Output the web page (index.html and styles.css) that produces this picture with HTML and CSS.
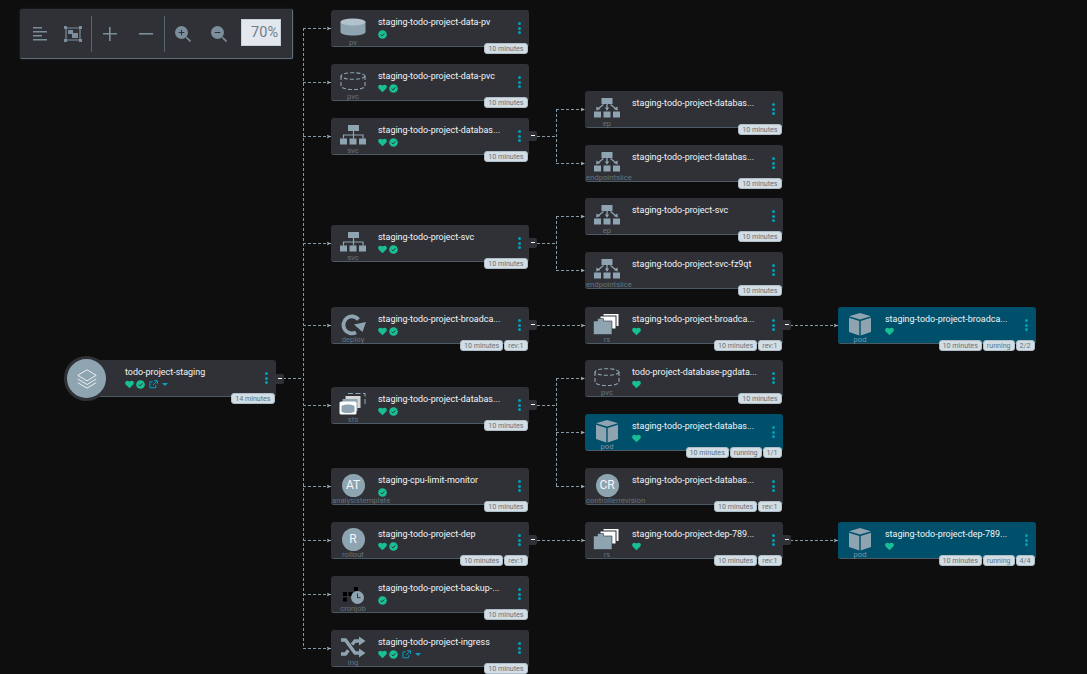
FILE: index.html
```html
<!DOCTYPE html>
<html lang="en">
<head>
    <meta charset="UTF-8">
    <title>Application resource tree</title>
    <link rel="stylesheet" href="styles.css">
</head>
<body>
    <!-- Icon set -->
    <svg class="defs" width="0" height="0">
        <symbol id="i-heart" viewBox="0 0 10 10"><path d="M5 9.2 1 5.2C-.2 4-.1 2.2 1 1.3 2.1.4 3.7.6 4.6 1.5L5 2l.4-.5c.9-.9 2.500-1.100 3.600-.2 1.100.9 1.200 2.700 0 3.900z"/></symbol>
        <symbol id="i-check" viewBox="0 0 10 10"><circle cx="5" cy="5" r="4.800"/><path d="M3 5.200 4.400 6.600 7.100 3.800" fill="none" stroke="#2f3136" stroke-width="1.100"/></symbol>
        <symbol id="i-link" viewBox="0 0 10 10"><path d="M7.600 5.600v3H1v-6.600h3.200M5.600.7h3.700v3.700M9.200.8 4.200 5.800" fill="none" stroke="currentColor" stroke-width="1.100"/></symbol>
        <symbol id="i-pv" viewBox="0 0 30 24"><path d="M2.500 7v10c0 2 5.500 3.500 12.500 3.500S27.500 19 27.500 17V7z"/><ellipse cx="15" cy="7" rx="12.500" ry="3.500" fill="#b3c3cd"/></symbol>
        <symbol id="i-pvc" viewBox="0 0 30 24"><g fill="none" stroke="currentColor" stroke-width="1.100" stroke-dasharray="4 2"><ellipse cx="15" cy="7" rx="12" ry="3.300"/><path d="M3 7v10c0 2 5.400 3.500 12 3.500S27 19 27 17V7"/></g></symbol>
        <symbol id="i-svc" viewBox="0 0 30 24"><path d="M10 2h11v6h-11zM2 15.500h7v6H2zM11.500 15.500h7v6h-7zM21 15.500h7v6h-7z"/><path d="M15.500 8v7.500M5.500 15.500V12h19.500v3.500" fill="none" stroke="currentColor" stroke-width="1.200"/></symbol>
        <symbol id="i-ep" viewBox="0 0 30 24"><path d="M9.500 2h11v6h-11zM2 15.500h7v6H2zM11.500 15.500h7v6h-7zM21 15.500h7v6h-7z"/><path d="M15 8v4M11.500 8.500 6.500 12.500M18.500 8.500 23.500 12.500" fill="none" stroke="currentColor" stroke-width="1.300"/><path d="M12.800 11.500h4.400L15 14.800zM4.500 10.500l4 2.600-4.300 1.400zM25.500 10.500l-4 2.600 4.300 1.400z"/></symbol>
        <symbol id="i-deploy" viewBox="0 0 30 24"><path d="M20.500 7.500A8.500 8.500 0 1 0 18 20.400" fill="none" stroke="currentColor" stroke-width="3.800"/><path d="M16 12.500 28 10 24.500 20z"/></symbol>
        <symbol id="i-rs" viewBox="0 0 30 24"><g stroke="#2f3136" stroke-width="1"><rect x="11" y="1.500" width="16" height="13" fill="#fff"/><rect x="8" y="4" width="16" height="13" fill="#fff"/></g><path d="M1.500 9h4V6.500h6V9H20v13.500H1.500z" stroke="#2f3136" stroke-width=".6"/></symbol>
        <symbol id="i-sts" viewBox="0 0 30 24"><path d="M10 1.500h17v12" fill="none" stroke="currentColor" stroke-width="1.100" stroke-dasharray="5 2.500"/><path d="M7.500 4h15v12H7.500z" fill="#fff" opacity=".8"/><path d="M4.500 7h15v12H4.500z" fill="#8fa4b1"/><rect x="1.500" y="9.500" width="17" height="13" rx="1.500" fill="#fff"/><path d="M3.500 14.500c0-1 2.500-2 6.500-2s6.500 1 6.500 2v5c0 .8-2.500 1.500-6.500 1.500s-6.500-.7-6.500-1.500z"/></symbol>
        <symbol id="i-pod" viewBox="0 0 30 24"><path d="M15 1 26 4.200 15 7.600 4 4.200z"/><path d="M4 5.700 14.300 9v14.500L4 20zM26 5.700 15.700 9v14.500L26 20z"/></symbol>
        <symbol id="i-cron" viewBox="0 0 30 24"><path d="M5 11h4v4H5zM5 16.500h4v4H5zM10.500 11h4v4h-4zM16 6h4v4h-4z" fill="#000"/><circle cx="19.500" cy="16.500" r="6.500"/><path d="M19.500 12.500v4.200h3" fill="none" stroke="#2f3136" stroke-width="1"/></symbol>
        <symbol id="i-ing" viewBox="0 0 30 24"><path d="M3 5h4.500l9.500 13h4.500M3 19h4.500l2.800-3.800M14 9.500 17 6h4.500" fill="none" stroke="currentColor" stroke-width="3.400"/><path d="M21 1.500 27.500 6 21 10.500zM21 13.500 27.500 18 21 22.500z"/></symbol>
        <symbol id="i-layers" viewBox="0 0 24 24"><g fill="none" stroke="#fff" stroke-width=".9" stroke-linejoin="round"><path d="M12 2 22 8 12 14 2 8z"/><path d="M2 12 12 18 22 12"/><path d="M2 16 12 22 22 16"/></g></symbol>
    </svg>

    <div class="canvas">
        <!-- Toolbar -->
        <div class="toolbar">
            <svg class="tool tool-sort" viewBox="0 0 14 14"><path d="M0 0h9v1.600H0zM0 4h14v1.600H0zM0 8h9v1.600H0zM0 12h14v1.600H0z"/></svg>
            <svg class="tool tool-fit" viewBox="0 0 18 16"><path d="M2 2h14v12H2z" fill="none" stroke="currentColor" stroke-width="1.200"/><path d="M0 0h3v3H0zM15 0h3v3h-3zM0 13h3v3H0zM15 13h3v3h-3zM4 4h5v4H4z"/><path d="M8 7h6v5H8z"/></svg>
            <span class="tool-sep"></span>
            <svg class="tool tool-plus" viewBox="0 0 14 14"><path d="M6 0h1.600v6H14v1.600H7.600V14H6V7.600H0V6h6z"/></svg>
            <svg class="tool tool-minus" viewBox="0 0 14 14"><path d="M0 6h14v1.600H0z"/></svg>
            <span class="tool-sep"></span>
            <svg class="tool tool-zoom" viewBox="0 0 16 16"><circle cx="6.500" cy="6.500" r="6.500"/><path d="M11 11l4.500 4.500" stroke="currentColor" stroke-width="1.600"/><path d="M3.700 6h5.600v1H3.700zM6 3.700h1v5.600H6z" fill="#2f3136"/></svg>
            <svg class="tool tool-zoom" viewBox="0 0 16 16"><circle cx="6.500" cy="6.500" r="6.500"/><path d="M11 11l4.500 4.500" stroke="currentColor" stroke-width="1.600"/><path d="M3.700 6h5.600v1H3.700z" fill="#2f3136"/></svg>
            <input class="zoom-input" value="70%">
        </div>

        <!-- Edges -->
        <svg class="edges" width="1087" height="674">
            <defs>
                <marker id="arrow" markerUnits="userSpaceOnUse" markerWidth="5" markerHeight="5" refX="4.500" refY="2.500" orient="auto"><path d="M0 .5 4.500 2.500 0 4.500 1.200 2.500z" fill="#9fb2be"/></marker>
            </defs>
            <g class="edge-lines">
                <path d="M283 378.500H303"/>
                <path d="M303.500 28V648"/>
                <path d="M303 28.500H331" marker-end="url(#arrow)"/>
                <path d="M303 82.500H331" marker-end="url(#arrow)"/>
                <path d="M303 136.500H331" marker-end="url(#arrow)"/>
                <path d="M303 243.500H331" marker-end="url(#arrow)"/>
                <path d="M303 325.500H331" marker-end="url(#arrow)"/>
                <path d="M303 405.500H331" marker-end="url(#arrow)"/>
                <path d="M303 486.500H331" marker-end="url(#arrow)"/>
                <path d="M303 540.500H331" marker-end="url(#arrow)"/>
                <path d="M303 594.500H331" marker-end="url(#arrow)"/>
                <path d="M303 648.500H331" marker-end="url(#arrow)"/>
                <path d="M537 136.500H556"/>
                <path d="M556.500 109V163"/>
                <path d="M556 109.500H585" marker-end="url(#arrow)"/>
                <path d="M556 163.500H585" marker-end="url(#arrow)"/>
                <path d="M537 243.500H556"/>
                <path d="M556.500 216V270"/>
                <path d="M556 216.500H585" marker-end="url(#arrow)"/>
                <path d="M556 270.500H585" marker-end="url(#arrow)"/>
                <path d="M537 325.500H585" marker-end="url(#arrow)"/>
                <path d="M537 405.500H556"/>
                <path d="M556.500 378V486"/>
                <path d="M556 378.500H585" marker-end="url(#arrow)"/>
                <path d="M556 432.500H585" marker-end="url(#arrow)"/>
                <path d="M556 486.500H585" marker-end="url(#arrow)"/>
                <path d="M537 540.500H585" marker-end="url(#arrow)"/>
                <path d="M790 325.500H838" marker-end="url(#arrow)"/>
                <path d="M790 540.500H838" marker-end="url(#arrow)"/>
            </g>
        </svg>

        <!-- Root -->
        <div class="node node-root" style="left:78px;top:360px">
            <div class="root-circle"><svg><use href="#i-layers"/></svg></div>
            <div class="node-icon"></div>
            <div class="node-body">
                <div class="node-title">todo-project-staging</div>
                <div class="node-status"><svg class="st st-ok"><use href="#i-heart"/></svg><svg class="st st-ok"><use href="#i-check"/></svg><svg class="st st-link"><use href="#i-link"/></svg><span class="caret"></span></div>
            </div>
            <div class="kebab"><i></i><i></i><i></i></div>
            <div class="tags"><span class="tag">14 minutes</span></div>
            <span class="collapse"></span>
        </div>

        <!-- Column 1 -->
        <div class="node" style="left:331px;top:10px">
            <div class="node-icon"><svg class="kind-icon"><use href="#i-pv"/></svg><span class="kind">pv</span></div>
            <div class="node-body"><div class="node-title">staging-todo-project-data-pv</div><div class="node-status"><svg class="st st-ok"><use href="#i-check"/></svg></div></div>
            <div class="kebab"><i></i><i></i><i></i></div>
            <div class="tags"><span class="tag">10 minutes</span></div>
        </div>
        <div class="node" style="left:331px;top:64px">
            <div class="node-icon"><svg class="kind-icon"><use href="#i-pvc"/></svg><span class="kind">pvc</span></div>
            <div class="node-body"><div class="node-title">staging-todo-project-data-pvc</div><div class="node-status"><svg class="st st-ok"><use href="#i-heart"/></svg><svg class="st st-ok"><use href="#i-check"/></svg></div></div>
            <div class="kebab"><i></i><i></i><i></i></div>
            <div class="tags"><span class="tag">10 minutes</span></div>
        </div>
        <div class="node" style="left:331px;top:118px">
            <div class="node-icon"><svg class="kind-icon"><use href="#i-svc"/></svg><span class="kind">svc</span></div>
            <div class="node-body"><div class="node-title">staging-todo-project-databas...</div><div class="node-status"><svg class="st st-ok"><use href="#i-heart"/></svg><svg class="st st-ok"><use href="#i-check"/></svg></div></div>
            <div class="kebab"><i></i><i></i><i></i></div>
            <div class="tags"><span class="tag">10 minutes</span></div>
            <span class="collapse"></span>
        </div>
        <div class="node" style="left:331px;top:225px">
            <div class="node-icon"><svg class="kind-icon"><use href="#i-svc"/></svg><span class="kind">svc</span></div>
            <div class="node-body"><div class="node-title">staging-todo-project-svc</div><div class="node-status"><svg class="st st-ok"><use href="#i-heart"/></svg><svg class="st st-ok"><use href="#i-check"/></svg></div></div>
            <div class="kebab"><i></i><i></i><i></i></div>
            <div class="tags"><span class="tag">10 minutes</span></div>
            <span class="collapse"></span>
        </div>
        <div class="node" style="left:331px;top:307px">
            <div class="node-icon"><svg class="kind-icon"><use href="#i-deploy"/></svg><span class="kind">deploy</span></div>
            <div class="node-body"><div class="node-title">staging-todo-project-broadca...</div><div class="node-status"><svg class="st st-ok"><use href="#i-heart"/></svg><svg class="st st-ok"><use href="#i-check"/></svg></div></div>
            <div class="kebab"><i></i><i></i><i></i></div>
            <div class="tags"><span class="tag">10 minutes</span><span class="tag">rev:1</span></div>
            <span class="collapse"></span>
        </div>
        <div class="node" style="left:331px;top:387px">
            <div class="node-icon"><svg class="kind-icon"><use href="#i-sts"/></svg><span class="kind">sts</span></div>
            <div class="node-body"><div class="node-title">staging-todo-project-databas...</div><div class="node-status"><svg class="st st-ok"><use href="#i-heart"/></svg><svg class="st st-ok"><use href="#i-check"/></svg></div></div>
            <div class="kebab"><i></i><i></i><i></i></div>
            <div class="tags"><span class="tag">10 minutes</span></div>
            <span class="collapse"></span>
        </div>
        <div class="node" style="left:331px;top:468px">
            <div class="node-icon"><span class="kind-circle">AT</span><span class="kind kind-long">analysistemplate</span></div>
            <div class="node-body"><div class="node-title">staging-cpu-limit-monitor</div><div class="node-status"><svg class="st st-ok"><use href="#i-check"/></svg></div></div>
            <div class="kebab"><i></i><i></i><i></i></div>
            <div class="tags"><span class="tag">10 minutes</span></div>
        </div>
        <div class="node" style="left:331px;top:522px">
            <div class="node-icon"><span class="kind-circle">R</span><span class="kind">rollout</span></div>
            <div class="node-body"><div class="node-title">staging-todo-project-dep</div><div class="node-status"><svg class="st st-ok"><use href="#i-heart"/></svg><svg class="st st-ok"><use href="#i-check"/></svg></div></div>
            <div class="kebab"><i></i><i></i><i></i></div>
            <div class="tags"><span class="tag">10 minutes</span><span class="tag">rev:1</span></div>
            <span class="collapse"></span>
        </div>
        <div class="node" style="left:331px;top:576px">
            <div class="node-icon"><svg class="kind-icon"><use href="#i-cron"/></svg><span class="kind">cronjob</span></div>
            <div class="node-body"><div class="node-title">staging-todo-project-backup-...</div><div class="node-status"><svg class="st st-ok"><use href="#i-check"/></svg></div></div>
            <div class="kebab"><i></i><i></i><i></i></div>
            <div class="tags"><span class="tag">10 minutes</span></div>
        </div>
        <div class="node" style="left:331px;top:630px">
            <div class="node-icon"><svg class="kind-icon"><use href="#i-ing"/></svg><span class="kind">ing</span></div>
            <div class="node-body"><div class="node-title">staging-todo-project-ingress</div><div class="node-status"><svg class="st st-ok"><use href="#i-heart"/></svg><svg class="st st-ok"><use href="#i-check"/></svg><svg class="st st-link"><use href="#i-link"/></svg><span class="caret"></span></div></div>
            <div class="kebab"><i></i><i></i><i></i></div>
            <div class="tags"><span class="tag">10 minutes</span></div>
        </div>

        <!-- Column 2 -->
        <div class="node" style="left:585px;top:91px">
            <div class="node-icon"><svg class="kind-icon"><use href="#i-ep"/></svg><span class="kind">ep</span></div>
            <div class="node-body"><div class="node-title">staging-todo-project-databas...</div></div>
            <div class="kebab"><i></i><i></i><i></i></div>
            <div class="tags"><span class="tag">10 minutes</span></div>
        </div>
        <div class="node" style="left:585px;top:145px">
            <div class="node-icon"><svg class="kind-icon"><use href="#i-ep"/></svg><span class="kind kind-long">endpointslice</span></div>
            <div class="node-body"><div class="node-title">staging-todo-project-databas...</div></div>
            <div class="kebab"><i></i><i></i><i></i></div>
            <div class="tags"><span class="tag">10 minutes</span></div>
        </div>
        <div class="node" style="left:585px;top:198px">
            <div class="node-icon"><svg class="kind-icon"><use href="#i-ep"/></svg><span class="kind">ep</span></div>
            <div class="node-body"><div class="node-title">staging-todo-project-svc</div></div>
            <div class="kebab"><i></i><i></i><i></i></div>
            <div class="tags"><span class="tag">10 minutes</span></div>
        </div>
        <div class="node" style="left:585px;top:252px">
            <div class="node-icon"><svg class="kind-icon"><use href="#i-ep"/></svg><span class="kind kind-long">endpointslice</span></div>
            <div class="node-body"><div class="node-title">staging-todo-project-svc-fz9qt</div></div>
            <div class="kebab"><i></i><i></i><i></i></div>
            <div class="tags"><span class="tag">10 minutes</span></div>
        </div>
        <div class="node" style="left:585px;top:307px">
            <div class="node-icon"><svg class="kind-icon"><use href="#i-rs"/></svg><span class="kind">rs</span></div>
            <div class="node-body"><div class="node-title">staging-todo-project-broadca...</div><div class="node-status"><svg class="st st-ok"><use href="#i-heart"/></svg></div></div>
            <div class="kebab"><i></i><i></i><i></i></div>
            <div class="tags"><span class="tag">10 minutes</span><span class="tag">rev:1</span></div>
            <span class="collapse"></span>
        </div>
        <div class="node" style="left:585px;top:360px">
            <div class="node-icon"><svg class="kind-icon"><use href="#i-pvc"/></svg><span class="kind">pvc</span></div>
            <div class="node-body"><div class="node-title">todo-project-database-pgdata...</div><div class="node-status"><svg class="st st-ok"><use href="#i-heart"/></svg></div></div>
            <div class="kebab"><i></i><i></i><i></i></div>
            <div class="tags"><span class="tag">10 minutes</span></div>
        </div>
        <div class="node node-pod" style="left:585px;top:414px">
            <div class="node-icon"><svg class="kind-icon"><use href="#i-pod"/></svg><span class="kind">pod</span></div>
            <div class="node-body"><div class="node-title">staging-todo-project-databas...</div><div class="node-status"><svg class="st st-ok"><use href="#i-heart"/></svg></div></div>
            <div class="kebab"><i></i><i></i><i></i></div>
            <div class="tags"><span class="tag">10 minutes</span><span class="tag">running</span><span class="tag">1/1</span></div>
        </div>
        <div class="node" style="left:585px;top:468px">
            <div class="node-icon"><span class="kind-circle">CR</span><span class="kind kind-long">controllerrevision</span></div>
            <div class="node-body"><div class="node-title">staging-todo-project-databas...</div></div>
            <div class="kebab"><i></i><i></i><i></i></div>
            <div class="tags"><span class="tag">10 minutes</span><span class="tag">rev:1</span></div>
        </div>
        <div class="node" style="left:585px;top:522px">
            <div class="node-icon"><svg class="kind-icon"><use href="#i-rs"/></svg><span class="kind">rs</span></div>
            <div class="node-body"><div class="node-title">staging-todo-project-dep-789...</div><div class="node-status"><svg class="st st-ok"><use href="#i-heart"/></svg></div></div>
            <div class="kebab"><i></i><i></i><i></i></div>
            <div class="tags"><span class="tag">10 minutes</span><span class="tag">rev:1</span></div>
            <span class="collapse"></span>
        </div>

        <!-- Column 3 -->
        <div class="node node-pod" style="left:838px;top:307px">
            <div class="node-icon"><svg class="kind-icon"><use href="#i-pod"/></svg><span class="kind">pod</span></div>
            <div class="node-body"><div class="node-title">staging-todo-project-broadca...</div><div class="node-status"><svg class="st st-ok"><use href="#i-heart"/></svg></div></div>
            <div class="kebab"><i></i><i></i><i></i></div>
            <div class="tags"><span class="tag">10 minutes</span><span class="tag">running</span><span class="tag">2/2</span></div>
        </div>
        <div class="node node-pod" style="left:838px;top:522px">
            <div class="node-icon"><svg class="kind-icon"><use href="#i-pod"/></svg><span class="kind">pod</span></div>
            <div class="node-body"><div class="node-title">staging-todo-project-dep-789...</div><div class="node-status"><svg class="st st-ok"><use href="#i-heart"/></svg></div></div>
            <div class="kebab"><i></i><i></i><i></i></div>
            <div class="tags"><span class="tag">10 minutes</span><span class="tag">running</span><span class="tag">4/4</span></div>
        </div>
    </div>
</body>
</html>
```
FILE: styles.css
```css
/* Resource tree, dark theme */
html, body {
    margin: 0;
    height: 100%;
    overflow: hidden;
    background-color: #0e0e0e;
}
body {
    font-family: Roboto, "Liberation Sans", sans-serif;
}
.defs {
    position: absolute;
}
.canvas {
    position: relative;
    width: 1087px;
    height: 674px;
    overflow: hidden;
}

/* Toolbar */
.toolbar {
    position: absolute;
    left: 20px;
    top: 9px;
    box-sizing: border-box;
    width: 273px;
    height: 50px;
    display: flex;
    align-items: center;
    background-color: #2f3136;
    border-right: 1px solid #5d6e79;
    border-bottom: 1px solid #5d6e79;
    border-radius: 2px;
    color: #7a8e9b;
    box-shadow: 0 0 3px rgba(120, 140, 150, 0.25);
}
.tool {
    fill: currentColor;
    flex: none;
}
.tool-sort {
    width: 14px;
    height: 14px;
    margin-left: 13px;
}
.tool-fit {
    width: 18px;
    height: 16px;
    margin-left: 17px;
}
.tool-sep {
    width: 1px;
    height: 36px;
    background-color: #566670;
    margin-left: 9px;
}
.tool-plus {
    width: 14px;
    height: 14px;
    margin-left: 11px;
}
.tool-minus {
    width: 14px;
    height: 14px;
    margin-left: 22px;
    margin-right: 1px;
}
.tool-minus + .tool-sep {
    margin-left: 10px;
}
.tool-zoom {
    width: 16px;
    height: 16px;
    margin-left: 10px;
}
.tool-zoom + .tool-zoom {
    margin-left: 20px;
}
.zoom-input {
    box-sizing: border-box;
    width: 40px;
    height: 27px;
    margin: 0 0 2px 14px;
    padding: 0 2px 0 0;
    background-color: #e2e8ee;
    border: 1px solid #c5d0d8;
    color: #6d7f8b;
    font-family: inherit;
    font-size: 14.500px;
    text-align: right;
}

/* Edges */
.edges {
    position: absolute;
    left: 0;
    top: 0;
}
.edge-lines path {
    fill: none;
    stroke: #8598a5;
    stroke-width: 1;
    stroke-dasharray: 3 2;
}

/* Nodes */
.node {
    position: absolute;
    box-sizing: border-box;
    width: 198px;
    height: 37px;
    display: flex;
    background-color: #2f3136;
    border-bottom: 1px solid #4b5a65;
    border-radius: 3px;
}
.node-pod {
    background-color: #00506b;
}
.node-pod .kind {
    color: #7f96a3;
}
.node-icon {
    flex: none;
    width: 44px;
    margin-right: 3px;
    padding-top: 5px;
    display: flex;
    flex-direction: column;
    align-items: center;
    color: #8fa4b1;
    fill: #8fa4b1;
}
.kind-icon {
    flex: none;
    width: 30px;
    height: 24px;
}
.kind-circle {
    flex: none;
    width: 23px;
    height: 23px;
    margin: 1px 0 0;
    border-radius: 50%;
    background-color: #8fa4b1;
    color: #f4f7f9;
    font-size: 12px;
    line-height: 23px;
    text-align: center;
}
.kind {
    flex: none;
    margin-top: -1px;
    color: #63747f;
    font-size: 7.700px;
    line-height: 10px;
    white-space: nowrap;
}
.kind-long {
    align-self: flex-start;
    margin-left: 1px;
}
.node-body {
    flex: none;
    width: 126px;
    padding-top: 5.500px;
}
.node-title {
    color: #f2f4f6;
    font-size: 8.960px;
    line-height: 13px;
    white-space: nowrap;
}
.node-status {
    display: flex;
    align-items: center;
    gap: 2px;
    height: 11px;
    margin-top: 0;
}
.st {
    flex: none;
    width: 9px;
    height: 9px;
}
.st-ok {
    fill: #18be94;
}
.st-link {
    margin-left: 2px;
    color: #0a9fc4;
}
.caret {
    margin-left: 2px;
    width: 0;
    height: 0;
    border-left: 3px solid transparent;
    border-right: 3px solid transparent;
    border-top: 3px solid #0a9fc4;
}
.kebab {
    margin-left: auto;
    margin-right: 8.500px;
    align-self: center;
    display: flex;
    flex-direction: column;
    gap: 1.300px;
}
.kebab i {
    display: block;
    width: 3px;
    height: 3px;
    border-radius: 50%;
    background-color: #00a0b8;
}
.tags {
    position: absolute;
    right: 1.500px;
    bottom: -8px;
    display: flex;
    gap: 1px;
}
.tag {
    box-sizing: border-box;
    height: 11px;
    padding: 0 3px;
    background-color: #d3dde4;
    border: 1px solid #aebdc8;
    border-radius: 3px;
    color: #63747f;
    font-size: 7.100px;
    line-height: 9px;
    white-space: nowrap;
}
.collapse {
    position: absolute;
    left: 100%;
    top: 13px;
    width: 8px;
    height: 10px;
    background-color: #2f3136;
    border-radius: 0 2px 2px 0;
}
.collapse::after {
    content: "";
    position: absolute;
    left: 2px;
    top: 4px;
    width: 4px;
    height: 1px;
    background-color: #fff;
}

/* Root node with its round badge */
.node-root .collapse {
    top: 14px;
}
.root-circle {
    position: absolute;
    left: -14px;
    top: -4px;
    box-sizing: border-box;
    width: 45px;
    height: 45px;
    border: 3px solid #2f3136;
    border-radius: 50%;
    background-color: #8fa4b1;
    display: flex;
    align-items: center;
    justify-content: center;
}
.root-circle svg {
    width: 22px;
    height: 22px;
}
```
